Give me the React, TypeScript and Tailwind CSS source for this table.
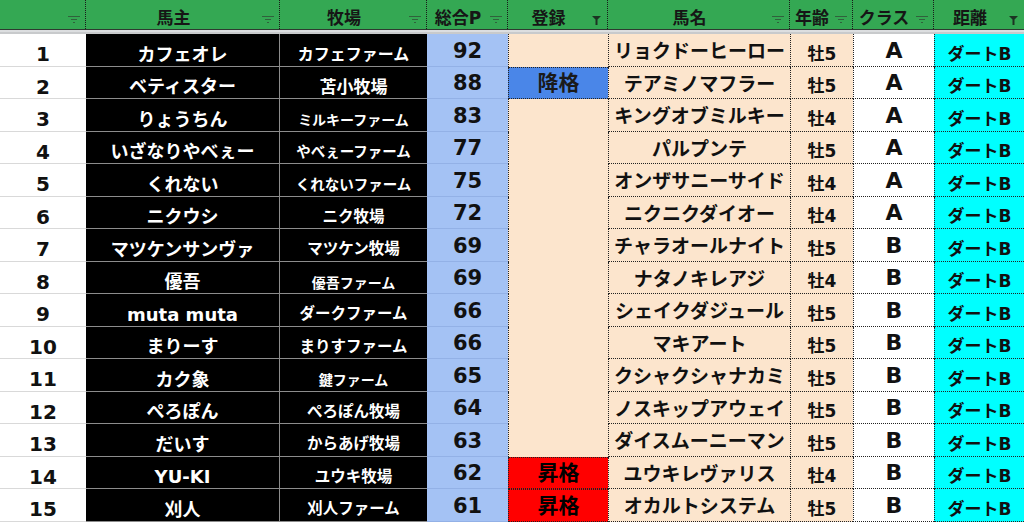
const cols = 'grid grid-cols-[86px_194px_147px_81px_100px_182px_63px_81px_90px]';

type Row = {
  no: number;
  owner: string;
  farm: string;
  farmSize?: string;
  pts: number;
  status?: 'down' | 'up';
  horse: string;
  age: string;
  cls: string;
};

const rows: Row[] = [
  { no: 1, owner: 'カフェオレ', farm: 'カフェファーム', farmSize: 'text-[16px]', pts: 92, horse: 'リョクドーヒーロー', age: '牡5', cls: 'A' },
  { no: 2, owner: 'ベティスター', farm: '苫小牧場', farmSize: 'text-[17px]', pts: 88, status: 'down', horse: 'テアミノマフラー', age: '牡5', cls: 'A' },
  { no: 3, owner: 'りょうちん', farm: 'ミルキーファーム', farmSize: 'text-[14px]', pts: 83, horse: 'キングオブミルキー', age: '牡4', cls: 'A' },
  { no: 4, owner: 'いざなりやべぇー', farm: 'やべぇーファーム', farmSize: 'text-[14.5px]', pts: 77, horse: 'パルプンテ', age: '牡5', cls: 'A' },
  { no: 5, owner: 'くれない', farm: 'くれないファーム', farmSize: 'text-[14.5px]', pts: 75, horse: 'オンザサニーサイド', age: '牡4', cls: 'A' },
  { no: 6, owner: 'ニクウシ', farm: 'ニク牧場', pts: 72, horse: 'ニクニクダイオー', age: '牡4', cls: 'A' },
  { no: 7, owner: 'マツケンサンヴァ', farm: 'マツケン牧場', pts: 69, horse: 'チャラオールナイト', age: '牡5', cls: 'B' },
  { no: 8, owner: '優吾', farm: '優吾ファーム', farmSize: 'text-[14px]', pts: 69, horse: 'ナタノキレアジ', age: '牡4', cls: 'B' },
  { no: 9, owner: 'muta muta', farm: 'ダークファーム', pts: 66, horse: 'シェイクダジュール', age: '牡5', cls: 'B' },
  { no: 10, owner: 'まりーす', farm: 'まりすファーム', pts: 66, horse: 'マキアート', age: '牡5', cls: 'B' },
  { no: 11, owner: 'カク象', farm: '鍵ファーム', farmSize: 'text-[14px]', pts: 65, horse: 'クシャクシャナカミ', age: '牡5', cls: 'B' },
  { no: 12, owner: 'ぺろぽん', farm: 'ぺろぽん牧場', pts: 64, horse: 'ノスキップアウェイ', age: '牡5', cls: 'B' },
  { no: 13, owner: 'だいす', farm: 'からあげ牧場', pts: 63, horse: 'ダイスムーニーマン', age: '牡5', cls: 'B' },
  { no: 14, owner: 'YU-KI', farm: 'ユウキ牧場', pts: 62, status: 'up', horse: 'ユウキレヴァリス', age: '牡4', cls: 'B' },
  { no: 15, owner: '刈人', farm: '刈人ファーム', pts: 61, status: 'up', horse: 'オカルトシステム', age: '牡5', cls: 'B' },
];

const headers = [
  { label: '', active: false },
  { label: '馬主', active: false },
  { label: '牧場', active: false },
  { label: '総合P', active: false },
  { label: '登録', active: true },
  { label: '馬名', active: false },
  { label: '年齢', active: false },
  { label: 'クラス', active: false },
  { label: '距離', active: true },
];

function FilterIcon({ active }: { active: boolean }) {
  if (active) {
    return (
      <svg width="9" height="9" viewBox="0 0 9 9" className="absolute right-[6px] top-[16px]">
        <path d="M0 0h9L5.5 3.5V9h-2V3.5z" fill="#1c3323" />
      </svg>
    );
  }
  return (
    <svg width="12" height="8" viewBox="0 0 12 8" className="absolute right-[5px] top-[16px]">
      <path d="M0 0.5h12M3 3.5h6M5 6.5h2" stroke="#2f4a35" strokeWidth="1" opacity="0.75" />
    </svg>
  );
}

export default function App() {
  return (
    <div className="w-[1024px] h-[522px] overflow-hidden bg-white text-[#111] font-['DejaVu_Sans','Noto_Sans_CJK_JP',sans-serif] leading-none">
      {/* header */}
      <div className={`${cols} h-[30px] bg-[#34a853] border-b border-[#2e3a30]`}>
        {headers.map((h, i) => (
          <div
            key={i}
            className={`relative flex items-center justify-center pr-[18px] pt-[7px] text-[17px] font-bold text-[#161616] ${
              i < headers.length - 1 ? 'border-r border-dotted border-[#1a1a1a]' : ''
            }`}
          >
            {h.label}
            <FilterIcon active={h.active} />
          </div>
        ))}
      </div>
      <div className="h-[4px] bg-[#dcdee0] border-b-2 border-[#c8cacc]" />

      {/* body */}
      {rows.map((r, i) => (
        <div key={r.no} className={`${cols} ${i % 2 === 0 ? 'h-[33px]' : 'h-[32px]'}`}>
          <div className="flex items-center justify-center pt-[8px] border-b border-[#d9d9d9] text-[20px] font-bold">
            {r.no}
          </div>
          <div className="flex items-center justify-center pt-[9px] bg-black border-b border-r border-[#8c8c8c] text-white text-[18px] font-bold whitespace-nowrap">
            {r.owner}
          </div>
          <div
            className={`flex items-center justify-center pt-[10px] bg-black border-b border-[#8c8c8c] text-white font-bold whitespace-nowrap ${
              r.farmSize ?? 'text-[15.5px]'
            }`}
          >
            {r.farm}
          </div>
          <div className="flex items-center justify-center pt-[2px] bg-[#a4c2f4] border-b border-[#93b1e6] text-[21px] font-bold">
            {r.pts}
          </div>
          {r.status ? (
            <div
              className={`flex items-center justify-center pt-[1px] border-l border-y border-dotted border-[#222] text-[21px] font-bold ${
                r.status === 'down' ? 'bg-[#4a86e8] text-[#1a1a1a]' : 'bg-[#ff0000] text-black'
              }`}
            >
              {r.status === 'down' ? '降格' : '昇格'}
            </div>
          ) : (
            <div className="bg-[#fce5cd] border-l border-dotted border-[#222]" />
          )}
          <div className="flex items-center justify-center pt-[3px] bg-[#fce5cd] border-l border-b border-dotted border-[#222] text-[19px] font-bold whitespace-nowrap">
            {r.horse}
          </div>
          <div className="flex items-center justify-center pt-[8px] bg-[#fce5cd] border-l border-b border-dotted border-[#222] text-[17px] font-bold">
            {r.age}
          </div>
          <div className="flex items-center justify-center pt-[1px] bg-white border-l border-b border-dotted border-[#222] text-[22px] font-bold">
            {r.cls}
          </div>
          <div className="flex items-center justify-center pt-[8px] bg-[#00ffff] border-l border-b border-dotted border-[#222] text-[17px] font-bold whitespace-nowrap">
            ダートB
          </div>
        </div>
      ))}
    </div>
  );
}
